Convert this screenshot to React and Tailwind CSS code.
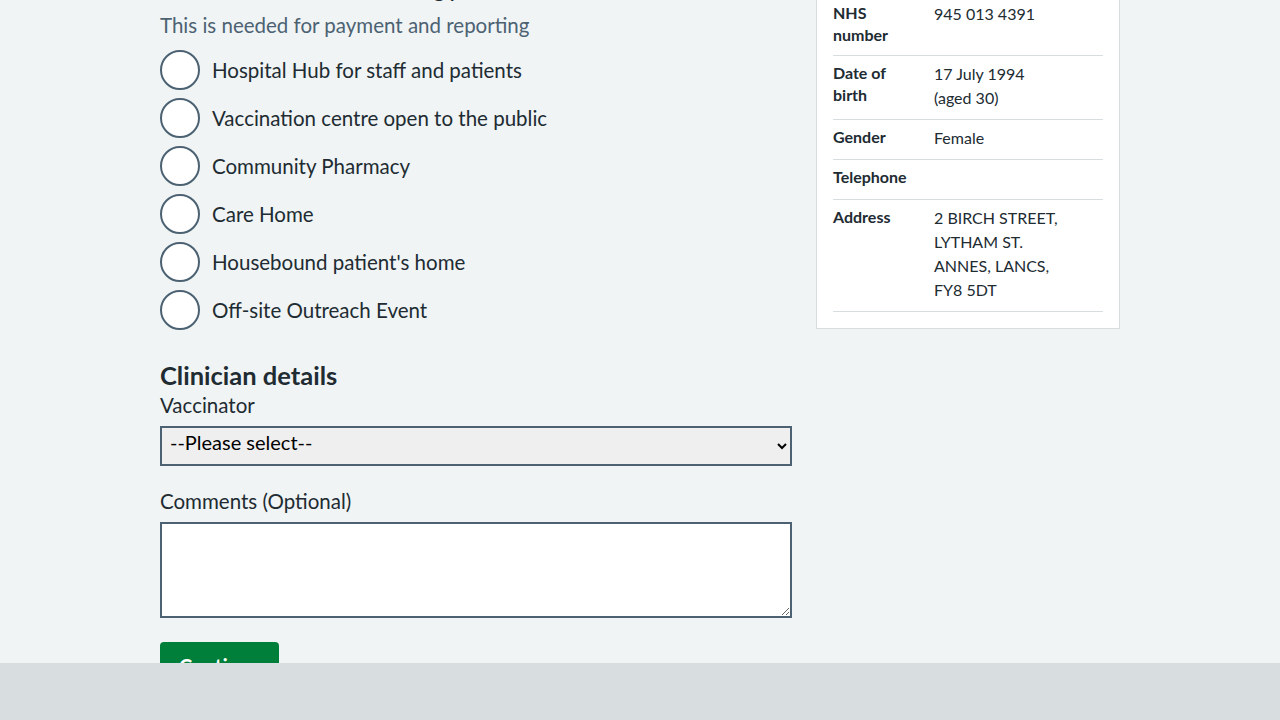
import React from 'react';

const font = { fontFamily: 'Lato, "Noto Sans", sans-serif' };

const settings = [
  'Hospital Hub for staff and patients',
  'Vaccination centre open to the public',
  'Community Pharmacy',
  'Care Home',
  "Housebound patient's home",
  'Off-site Outreach Event',
];

const patient = [
  { key: ['NHS', 'number'], value: ['945 013 4391'] },
  { key: ['Date of', 'birth'], value: ['17 July 1994', '(aged 30)'] },
  { key: ['Gender'], value: ['Female'] },
  { key: ['Telephone'], value: [] },
  { key: ['Address'], value: ['2 BIRCH STREET,', 'LYTHAM ST.', 'ANNES, LANCS,', 'FY8 5DT'] },
];

function Radio({ label }) {
  return (
    <label className="flex items-center gap-3 h-10 cursor-pointer">
      <span className="w-10 h-10 rounded-full border-2 border-[#4c6272] bg-white shrink-0" />
      <span className="text-[20.5px] leading-7 text-[#212b32]">{label}</span>
    </label>
  );
}

export default function App() {
  return (
    <div className="min-h-screen bg-[#f0f4f5] overflow-hidden" style={font}>
      <div className="w-[960px] mx-auto flex gap-6 -mt-[25px] pb-24">
        {/* Form column */}
        <div className="w-[632px] shrink-0">
          <fieldset>
            <legend className="text-[20.5px] leading-7 font-semibold text-[#212b32]">
              Where is the vaccination taking place?
            </legend>
            <div className="text-[20.5px] leading-7 text-[#4c6272] mt-[8px] mb-[11px]">
              This is needed for payment and reporting
            </div>
            <div className="flex flex-col gap-2">
              {settings.map((s) => (
                <Radio key={s} label={s} />
              ))}
            </div>
          </fieldset>

          <h2 className="text-[25.5px] leading-8 font-bold text-[#212b32] mt-[29px]">Clinician details</h2>
          <label className="block text-[20.5px] leading-7 text-[#212b32] mb-[7px]">Vaccinator</label>
          <select
            className="w-full h-10 bg-[#efefef] border-2 border-[#4c6272] pl-1 pr-1 pb-2 text-[20px] text-black"
            defaultValue=""
          >
            <option value="">--Please select--</option>
          </select>

          <label className="block text-[20.5px] leading-7 text-[#212b32] mt-[21px] mb-[7px]">Comments (Optional)</label>
          <textarea className="block w-full h-[96px] bg-white border-2 border-[#4c6272] p-1 text-[19px]" />

          <button className="mt-6 w-[119px] h-12 rounded bg-[#007f3b] shadow-[0_4px_0_#00401e] text-white text-[20px] font-bold text-left pl-[19px]">
            Continue
          </button>
        </div>

        {/* Patient card */}
        <div className="w-[304px] shrink-0 self-start mt-[4px] bg-white border border-[#d8dde0] px-4 pt-4 pb-4">
          {patient.map((row) => (
            <div key={row.key.join(' ')} className="flex border-b border-[#d8dde0] pt-[6px] pb-[9px] text-[16px] leading-6 text-[#212b32]">
              <div className="w-[101px] shrink-0 font-bold leading-[22px]">
                {row.key.map((k) => (
                  <div key={k}>{k}</div>
                ))}
              </div>
              <div className="min-h-6">
                {row.value.map((v) => (
                  <div key={v}>{v}</div>
                ))}
              </div>
            </div>
          ))}
        </div>
      </div>

      <div className="fixed left-0 right-0 bottom-0 h-[57px] bg-[#d8dde0]" />
    </div>
  );
}
